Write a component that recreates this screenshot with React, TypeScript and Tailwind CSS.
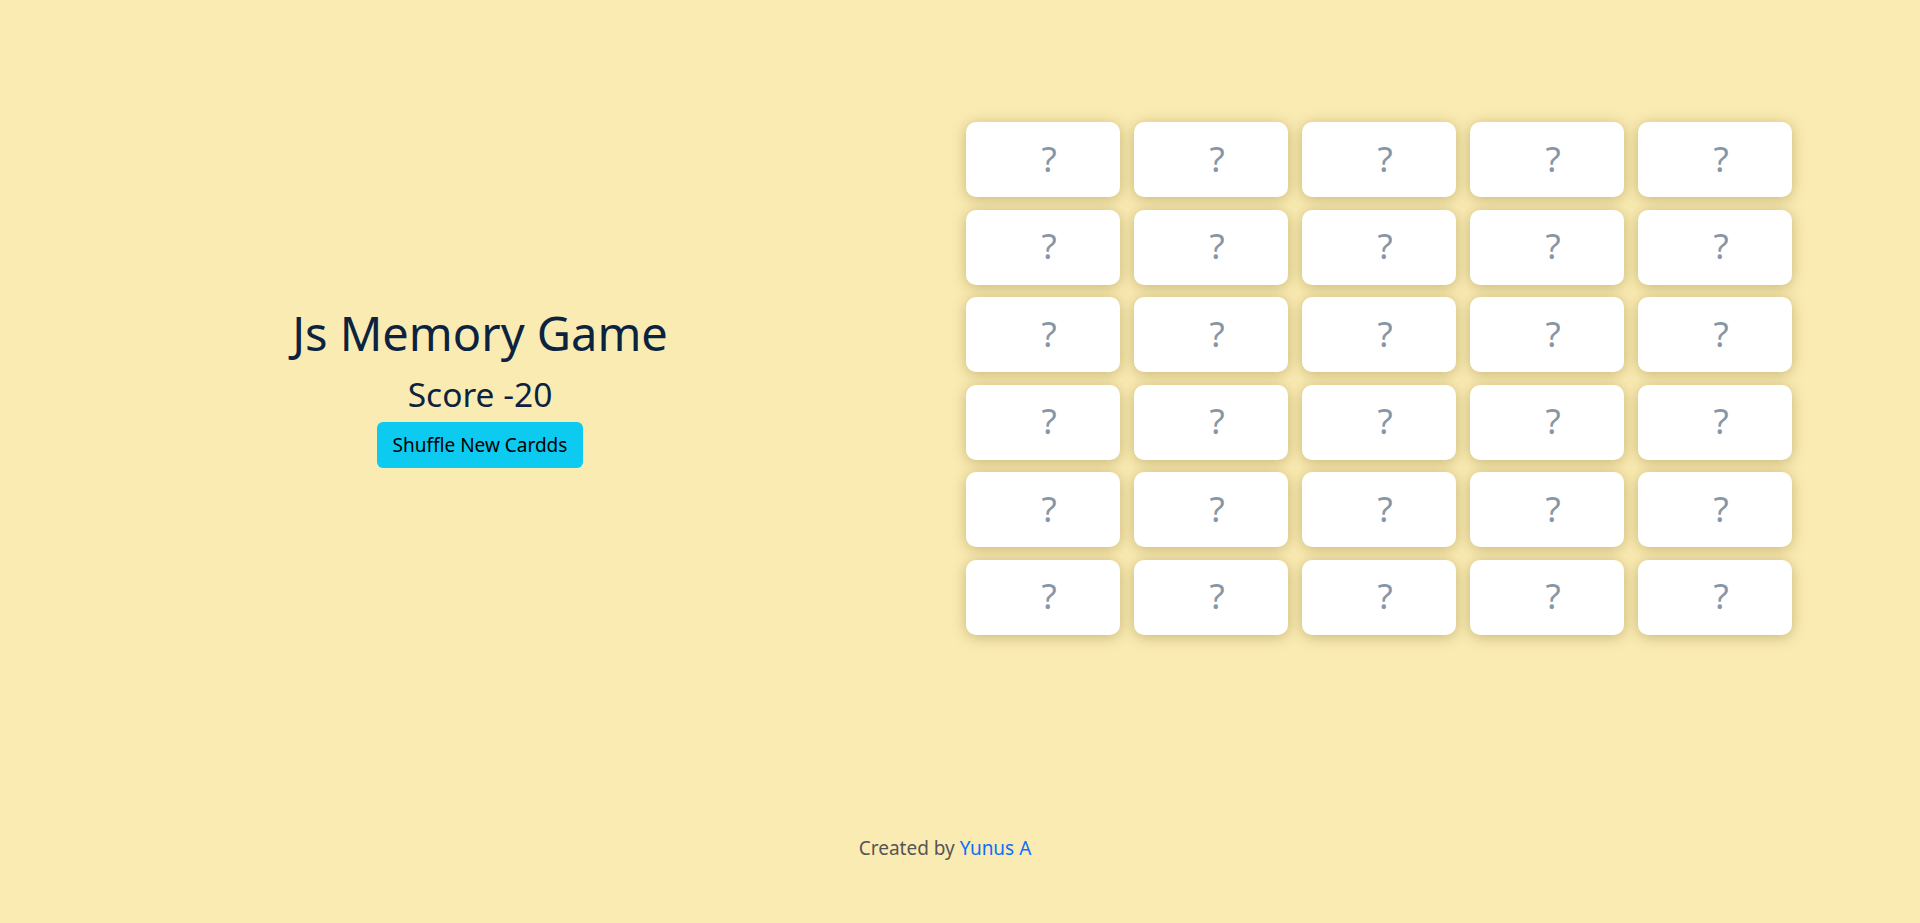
import React from "react";

const font = { fontFamily: '"Noto Sans", "Open Sans", sans-serif' };

export default function App() {
  const cards = Array.from({ length: 30 });
  return (
    <div
      className="min-h-screen w-full bg-[#faebb3] flex flex-col font-['Noto_Sans','Open_Sans',sans-serif]"
      style={font}
    >
      <div className="flex pt-[122px]">
        <div className="w-[960px] flex flex-col items-center justify-center pt-[16px]">
          <h1 className="text-[47px] leading-[56px] text-[#0c2340] font-normal">Js Memory Game</h1>
          <div className="text-[33.5px] leading-[40px] text-[#0c2340] mt-[13px]">Score -20</div>
          <button className="mt-[8px] h-[46px] w-[206px] rounded-[6px] bg-[#0dcaf0] text-black text-[19px]">
            Shuffle New Cardds
          </button>
        </div>
        <div className="pl-[6px]">
          <div className="grid grid-cols-[repeat(5,154px)] gap-x-[14px] gap-y-[12.6px]">
            {cards.map((_, i) => (
              <div
                key={i}
                className="h-[75px] rounded-[10px] bg-white shadow-[0_2px_14px_rgba(110,90,10,0.36)] flex items-center justify-center pl-[12px] pb-[3px]"
              >
                <span className="text-[35px] leading-none text-[#8696a7]">?</span>
              </div>
            ))}
          </div>
        </div>
      </div>
      <div className="mt-[200px] flex justify-center pr-[30px]">
        <p className="text-[19px] text-[#555] leading-[26px]">
          Created by <a className="text-[#0d6efd]">Yunus A</a>
        </p>
      </div>
    </div>
  );
}
